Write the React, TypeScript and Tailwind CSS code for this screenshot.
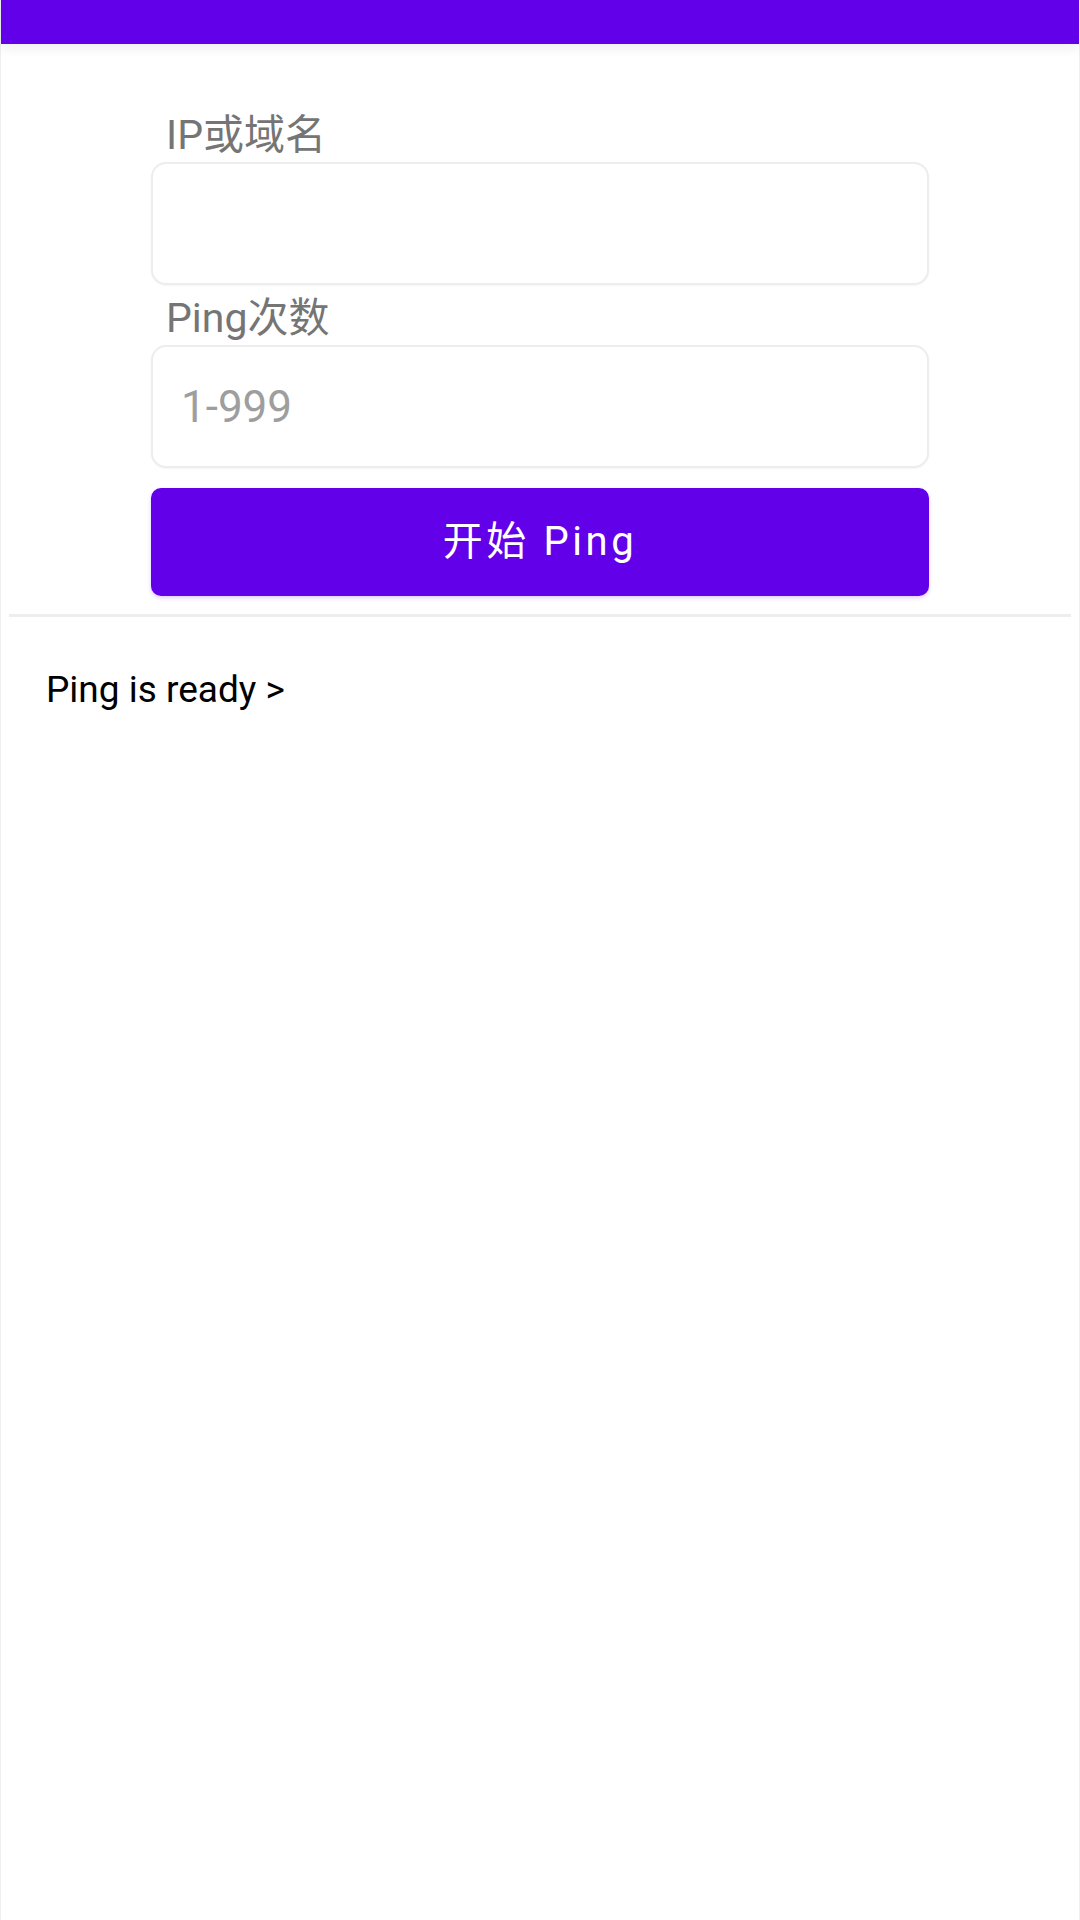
import * as React from "react"

const font = { fontFamily: '"Roboto", "Noto Sans CJK SC", sans-serif' }

function Field({ label, placeholder }: { label: string; placeholder?: string }) {
  return (
    <div className="flex flex-col">
      <label className="h-[50px] pl-[15px] pt-[2px] text-[41px] leading-[48px] text-[#757575]">{label}</label>
      <div className="mt-[3px] flex h-[123px] items-center rounded-[15px] border-2 border-[#ededed] bg-white px-[28px] shadow-[0_1px_2px_rgba(0,0,0,0.04)]">
        <input
          className="w-full bg-transparent text-[44px] text-[#333] outline-none placeholder:text-[#9e9e9e]"
          placeholder={placeholder}
          style={font}
        />
      </div>
    </div>
  )
}

export default function App() {
  return (
    <div className="flex min-h-[1920px] w-[1080px] flex-col border-x border-[#eeeeee] bg-white" style={font}>
      <div className="relative z-10 h-[44px] w-full bg-[#6200ea] shadow-[0_6px_10px_rgba(0,0,0,0.05)]" />

      <div className="mx-auto mt-[65px] flex w-[778px] flex-col">
        <Field label="IP或域名" />
        <div className="mt-[7px]">
          <Field label="Ping次数" placeholder="1-999" />
        </div>
        <button
          type="button"
          className="mt-[20px] h-[108px] w-full rounded-[10px] bg-[#6200ea] text-[40px] tracking-[0.09em] text-white shadow-[0_2px_4px_rgba(98,0,234,0.2)]"
        >
          开始 Ping
        </button>
      </div>

      <div className="mx-[8px] mt-[18px] h-[3px] bg-[#eeeeee]" />

      <div className="mt-[50px] px-[45px] text-[37px] leading-[46px] text-black">Ping is ready &gt;</div>
    </div>
  )
}
